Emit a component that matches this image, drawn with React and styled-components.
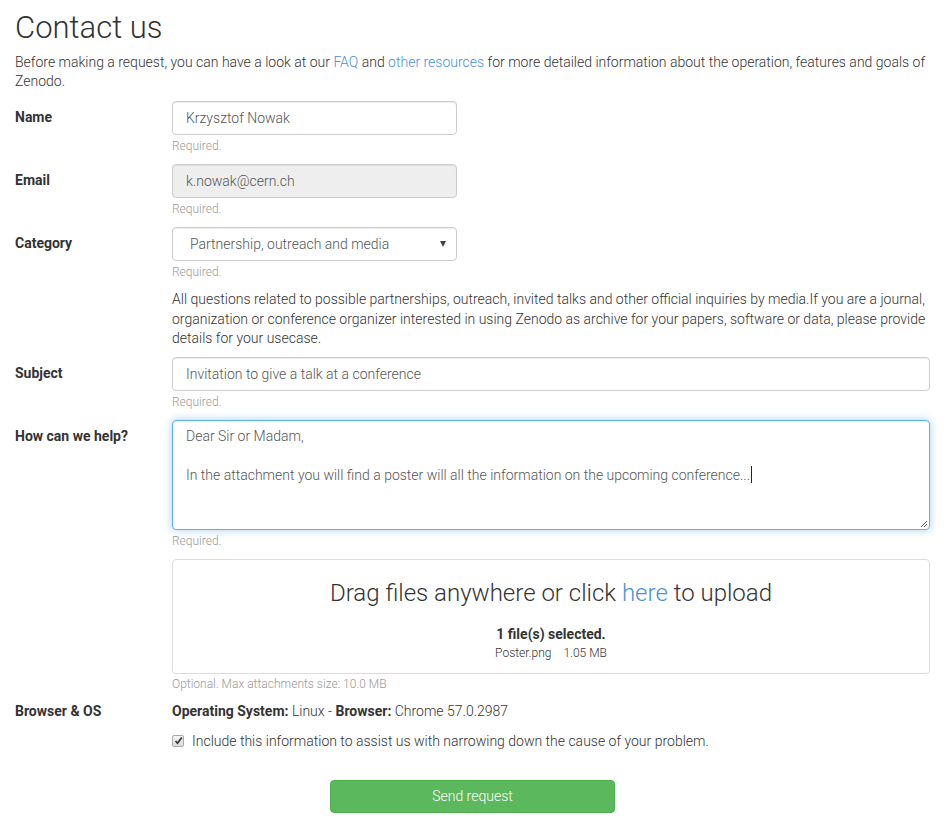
import React from "react";
import styled, { createGlobalStyle } from "styled-components";

const Global = createGlobalStyle`
  html, body { margin: 0; padding: 0; background: #fff; }
  body {
    font-family: Roboto, "Liberation Sans", Arial, sans-serif;
    font-weight: 300;
    font-size: 14px;
    color: #333;
  }
  * { box-sizing: border-box; }
`;

const Page = styled.div`
  padding: 0 18px 0 15px;
  width: 948px;
`;

const Title = styled.h1`
  font-size: 31px;
  font-weight: 300;
  margin: 10px 0 0 0;
  line-height: 36px;
`;

const Intro = styled.p`
  margin: 7px 0 10px 0;
  line-height: 19px;
  font-size: 14px;
`;

const Link = styled.a`
  color: #4a90d9;
  text-decoration: none;
`;

const Row = styled.div`
  display: flex;
  margin-bottom: ${(p) => p.$mb ?? 9}px;
`;

const Label = styled.div`
  width: 157px;
  flex: none;
  font-weight: 700;
  font-size: 14px;
  padding-top: ${(p) => p.$pt ?? 8}px;
  line-height: 17px;
`;

const Field = styled.div`
  flex: 1;
  display: flex;
  flex-direction: column;
  min-width: 0;
`;

const Input = styled.div`
  width: ${(p) => (p.$wide ? "100%" : "285px")};
  height: 34px;
  border: 1px solid #ccc;
  border-radius: 4px;
  background: ${(p) => (p.$disabled ? "#eee" : "#fff")};
  padding: 0 13px;
  display: flex;
  align-items: center;
  color: #555;
  font-size: 14px;
  box-shadow: inset 0 1px 1px rgba(0, 0, 0, 0.075);
`;

const Select = styled(Input)`
  justify-content: space-between;
  padding: 0 10px 0 17px;
`;

const Arrow = styled.span`
  width: 0;
  height: 0;
  border-left: 3.5px solid transparent;
  border-right: 3.5px solid transparent;
  border-top: 6px solid #444;
`;

const Help = styled.div`
  font-size: 12px;
  color: #999;
  line-height: 17px;
  margin-top: ${(p) => p.$mt ?? 3}px;
`;

const Desc = styled.div`
  margin-top: 9px;
  line-height: 19.5px;
  font-size: 14px;
  color: #333;
`;

const TextArea = styled.div`
  position: relative;
  height: 110px;
  border: 1px solid #66afe9;
  border-radius: 4px;
  padding: 6px 13px;
  color: #555;
  font-size: 14px;
  line-height: 19.5px;
  box-shadow: inset 0 1px 1px rgba(0, 0, 0, 0.075), 0 0 8px rgba(102, 175, 233, 0.6);
`;

const Line = styled.div`
  min-height: 19.5px;
`;

const Caret = styled.span`
  display: inline-block;
  width: 1px;
  height: 17px;
  background: #222;
  vertical-align: -3px;
  margin-left: 1px;
`;

const Grip = styled.svg`
  position: absolute;
  right: 1px;
  bottom: 1px;
`;

const Drop = styled.div`
  margin-top: 9px;
  height: 115px;
  border: 1px solid #ddd;
  border-radius: 4px;
  display: flex;
  flex-direction: column;
  align-items: center;
  padding-top: 18px;
`;

const DropTitle = styled.div`
  font-size: 24px;
  font-weight: 300;
  line-height: 30px;
  color: #333;
`;

const Selected = styled.div`
  margin-top: 17px;
  font-weight: 700;
  font-size: 14px;
  line-height: 18px;
`;

const FileLine = styled.div`
  font-size: 12px;
  line-height: 20px;
  color: #333;
  span + span { margin-left: 12px; }
`;

const Info = styled.div`
  padding-top: 10px;
  line-height: 17px;
  b { font-weight: 700; }
`;

const CheckRow = styled.label`
  display: flex;
  align-items: center;
  gap: 8px;
  margin-top: 13px;
  font-size: 14px;
`;

const Check = styled.span`
  width: 12px;
  height: 12px;
  border: 1px solid #a8a8a8;
  border-radius: 2px;
  background: linear-gradient(#f4f4f4, #dcdcdc);
  display: flex;
  align-items: center;
  justify-content: center;
`;

const Actions = styled.div`
  display: flex;
  justify-content: center;
  margin-top: 31px;
`;

const Button = styled.button`
  width: 285px;
  height: 33px;
  background: #5cb85c;
  border: 1px solid #4cae4c;
  border-radius: 4px;
  color: #fff;
  font-family: inherit;
  font-weight: 300;
  font-size: 14px;
`;

export default function App() {
  return (
    <Page>
      <Global />
      <Title>Contact us</Title>
      <Intro>
        Before making a request, you can have a look at our <Link>FAQ</Link> and{" "}
        <Link>other resources</Link> for more detailed information about the operation, features and
        goals of Zenodo.
      </Intro>

      <Row>
        <Label>Name</Label>
        <Field>
          <Input>Krzysztof Nowak</Input>
          <Help>Required.</Help>
        </Field>
      </Row>

      <Row>
        <Label>Email</Label>
        <Field>
          <Input $disabled>k.nowak@cern.ch</Input>
          <Help>Required.</Help>
        </Field>
      </Row>

      <Row $mb={8}>
        <Label>Category</Label>
        <Field>
          <Select>
            <span>Partnership, outreach and media</span>
            <Arrow />
          </Select>
          <Help>Required.</Help>
          <Desc>
            All questions related to possible partnerships, outreach, invited talks and other official
            inquiries by media.If you are a journal, organization or conference organizer interested in
            using Zenodo as archive for your papers, software or data, please provide details for your
            usecase.
          </Desc>
        </Field>
      </Row>

      <Row>
        <Label>Subject</Label>
        <Field>
          <Input $wide>Invitation to give a talk at a conference</Input>
          <Help>Required.</Help>
        </Field>
      </Row>

      <Row $mb={0}>
        <Label>How can we help?</Label>
        <Field>
          <TextArea>
            <Line>Dear Sir or Madam,</Line>
            <Line />
            <Line>
              In the attachment you will find a poster will all the information on the upcoming
              conference...
              <Caret />
            </Line>
            <Grip width="9" height="9" viewBox="0 0 9 9">
              <path d="M8 2 L2 8 M8 5 L5 8" stroke="#555" strokeWidth="1" />
            </Grip>
          </TextArea>
          <Help>Required.</Help>
          <Drop>
            <DropTitle>
              Drag files anywhere or click <Link>here</Link> to upload
            </DropTitle>
            <Selected>1 file(s) selected.</Selected>
            <FileLine>
              <span>Poster.png</span>
              <span>1.05 MB</span>
            </FileLine>
          </Drop>
          <Help $mt={2}>Optional. Max attachments size: 10.0 MB</Help>
        </Field>
      </Row>

      <Row $mb={0}>
        <Label $pt={10}>Browser &amp; OS</Label>
        <Field>
          <Info>
            <b>Operating System:</b> Linux - <b>Browser:</b> Chrome 57.0.2987
          </Info>
          <CheckRow>
            <Check>
              <svg width="9" height="9" viewBox="0 0 9 9">
                <path d="M1.5 5 L3.5 7.2 L7.8 1.5" stroke="#333" strokeWidth="1.7" fill="none" />
              </svg>
            </Check>
            Include this information to assist us with narrowing down the cause of your problem.
          </CheckRow>
        </Field>
      </Row>

      <Actions>
        <Button>Send request</Button>
      </Actions>
    </Page>
  );
}
